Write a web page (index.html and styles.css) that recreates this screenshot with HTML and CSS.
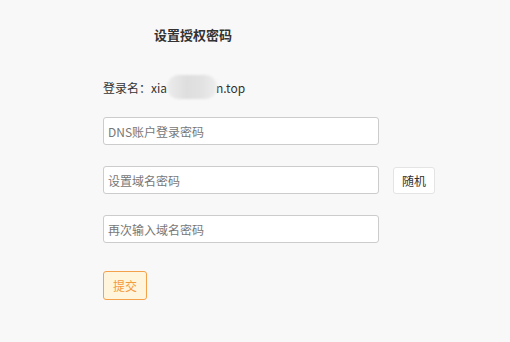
FILE: index.html
```html
<!DOCTYPE html>
<html lang="zh-CN">
<head>
    <meta charset="UTF-8">
    <meta name="viewport" content="width=device-width, initial-scale=1.0">
    <title>设置授权密码</title>
    <link rel="stylesheet" href="styles.css">
</head>
<body>

    <div class="form-box">
        <h1 class="title">设置授权密码</h1>

        <div class="login-name">
            登录名：xia<span class="mask"></span>n.top
        </div>

        <div class="row">
            <input class="field" type="password" placeholder="DNS账户登录密码">
        </div>

        <div class="row">
            <input class="field" type="text" placeholder="设置域名密码">
            <button class="btn-random" type="button">随机</button>
        </div>

        <div class="row">
            <input class="field" type="text" placeholder="再次输入域名密码">
        </div>

        <button class="btn-submit" type="button">提交</button>
    </div>

</body>
</html>
```

FILE: styles.css
```css
body, html {
    margin: 0;
    padding: 0;
    height: 100%;
    background-color: #f8f8f8;
    font-family: "Noto Sans CJK SC", "Noto Sans", sans-serif;
    color: #333333;
}

.form-box {
    display: flex;
    flex-direction: column;
    align-items: flex-start;
    padding: 25px 0 0 103px;
}

.title {
    margin: 0 0 32px 51px;
    font-size: 13px;
    line-height: 20px;
    font-weight: bold;
    color: #333333;
}

.login-name {
    display: flex;
    align-items: center;
    height: 20px;
    font-size: 12px;
    margin-bottom: 20px;
}

.mask {
    display: inline-block;
    width: 50px;
    height: 24px;
    border-radius: 12px;
    background: linear-gradient(90deg, #ececec 0%, #dedede 40%, #e2e2e2 70%, #eeeeee 100%);
    filter: blur(1px);
    margin: 0 -1px 0 0;
}

.row {
    display: flex;
    align-items: center;
    margin-bottom: 21px;
}

.field {
    box-sizing: border-box;
    width: 276px;
    height: 28px;
    padding: 0 4px;
    border: 1px solid #cccccc;
    border-radius: 3px;
    background-color: #ffffff;
    font-family: inherit;
    font-size: 12px;
    color: #333333;
    outline: none;
}

.field::placeholder {
    color: #777777;
}

.btn-random {
    box-sizing: border-box;
    margin-left: 14px;
    width: 42px;
    height: 27px;
    border: 1px solid #e4e4e4;
    border-radius: 3px;
    background-color: #ffffff;
    font-family: inherit;
    font-size: 12px;
    color: #333333;
    padding: 0;
}

.btn-submit {
    box-sizing: border-box;
    margin-top: 7px;
    width: 44px;
    height: 29px;
    border: 1px solid #f5a04a;
    border-radius: 3px;
    background-color: #fff5dc;
    font-family: inherit;
    font-size: 12px;
    color: #f39a3e;
    padding: 0;
}
```
